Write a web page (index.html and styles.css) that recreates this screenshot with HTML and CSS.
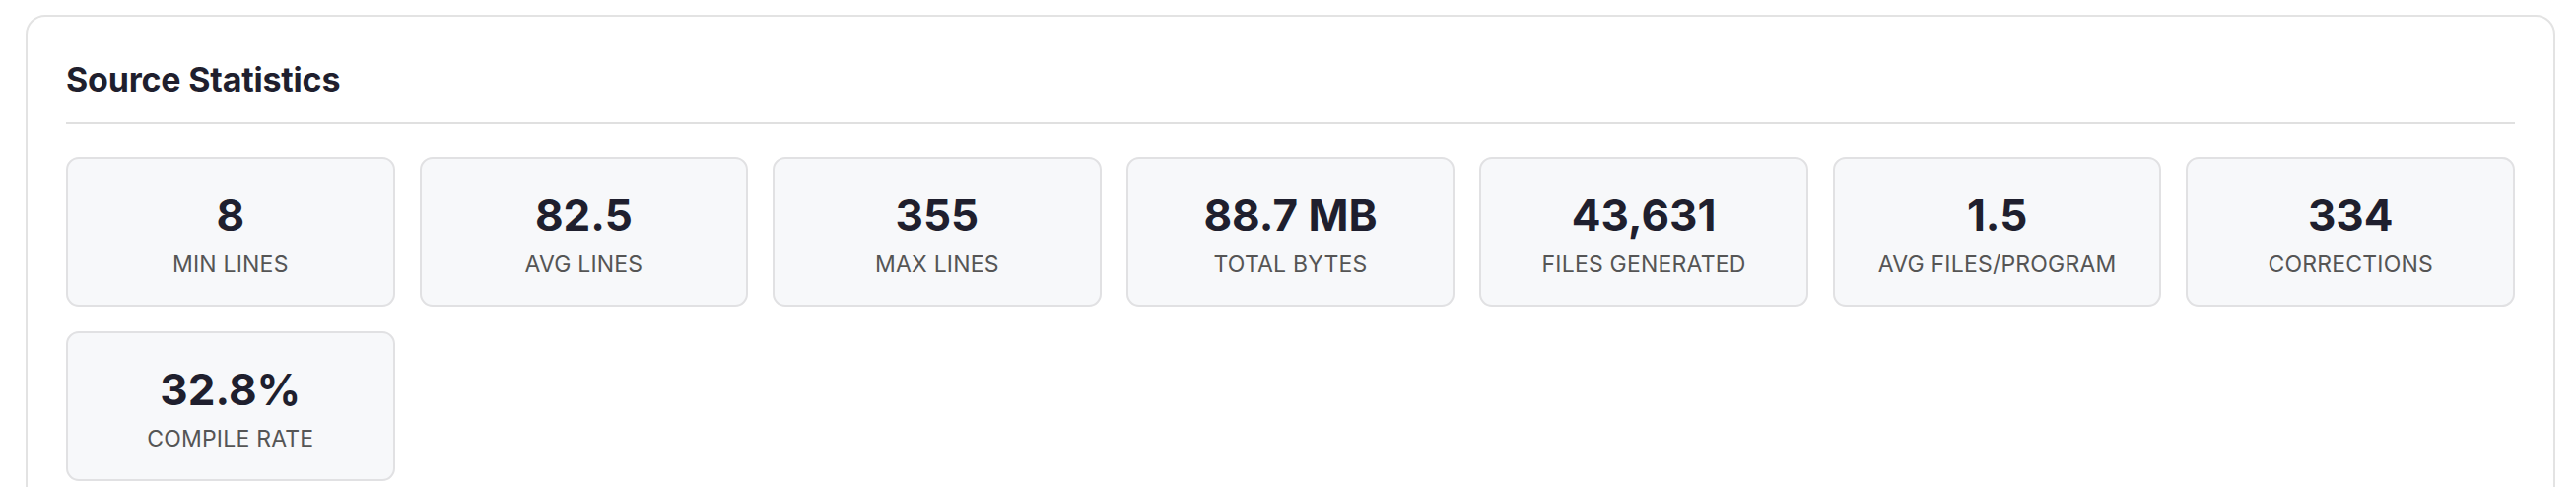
FILE: index.html
```html
<!DOCTYPE html>
<html lang="en">
<head>
<meta charset="utf-8">
<title>Source Statistics</title>
<link rel="stylesheet" href="styles.css">
</head>
<body>
<main class="page">
  <section class="panel">
    <h2 class="panel-title">Source Statistics</h2>
    <div class="stats-grid">
      <div class="stat"><div class="stat-value">8</div><div class="stat-label">Min Lines</div></div>
      <div class="stat"><div class="stat-value">82.5</div><div class="stat-label">Avg Lines</div></div>
      <div class="stat"><div class="stat-value">355</div><div class="stat-label">Max Lines</div></div>
      <div class="stat"><div class="stat-value">88.7 MB</div><div class="stat-label">Total Bytes</div></div>
      <div class="stat"><div class="stat-value">43,631</div><div class="stat-label">Files Generated</div></div>
      <div class="stat"><div class="stat-value">1.5</div><div class="stat-label">Avg Files/Program</div></div>
      <div class="stat"><div class="stat-value">334</div><div class="stat-label">Corrections</div></div>
      <div class="stat"><div class="stat-value">32.8%</div><div class="stat-label">Compile Rate</div></div>
    </div>
  </section>
</main>
</body>
</html>
```
FILE: styles.css
```css
html, body {
  margin: 0;
  padding: 0;
  background: #ffffff;
}

body {
  font-family: Inter, "Noto Sans", "Liberation Sans", sans-serif;
  color: #1f1f2e;
}

.page {
  padding: 15px 21px 0 26px;
}

.panel {
  background: #ffffff;
  border: 2px solid #e3e3e3;
  border-radius: 20px;
  padding: 39px 39px 40px 39px;
}

.panel-title {
  margin: 0 0 33px 0;
  font-size: 34px;
  font-weight: 700;
  line-height: 50px;
  letter-spacing: -0.2px;
  color: #1f1f2e;
  padding-bottom: 18px;
  border-bottom: 2px solid #e0e0e0;
}

.stats-grid {
  display: grid;
  grid-template-columns: repeat(7, 1fr);
  gap: 25px;
}

.stat {
  background: #f7f8fa;
  border: 2px solid #e1e1e3;
  border-radius: 13px;
  padding: 29px 16px 25px;
  text-align: center;
  height: 152px;
  box-sizing: border-box;
}

.stat-value {
  font-size: 44px;
  font-weight: 700;
  line-height: 56px;
  color: #1f1f2e;
}

.stat-label {
  margin-top: 6px;
  font-size: 23px;
  line-height: 32px;
  text-transform: uppercase;
  color: #555555;
  letter-spacing: 0.2px;
}
```
